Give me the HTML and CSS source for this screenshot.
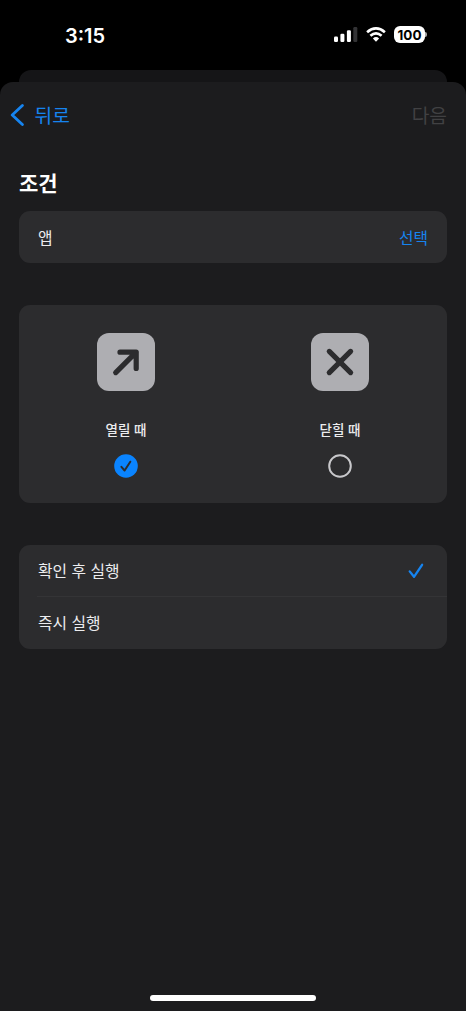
FILE: index.html
```html
<!DOCTYPE html>
<html lang="ko">
<head>
<meta charset="utf-8">
<meta name="viewport" content="width=device-width, initial-scale=1">
<title>조건</title>
<link rel="stylesheet" href="styles.css">
</head>
<body>
<div class="screen">
  <header class="status">
    <span class="time">3:15</span>
    <div class="indicators">
      <svg class="signal" width="24" height="15" viewBox="0 0 24 15">
        <rect x="0" y="9.5" width="4" height="5.5" rx="1.2"/>
        <rect x="6.4" y="6.8" width="4" height="8.2" rx="1.2"/>
        <rect x="12.9" y="3.3" width="4" height="11.7" rx="1.2"/>
        <rect class="dim" x="19.3" y="0" width="4" height="15" rx="1.2"/>
      </svg>
      <svg class="wifi" width="20" height="15" viewBox="0 0 20 15">
        <path d="M1.1 5.2Q10-2.4 18.9 5.2"/>
        <path d="M4.4 8.7Q10 3.9 15.6 8.7"/>
        <path class="dot" d="M6.9 11.4Q10 8.8 13.1 11.4L10 14.7Z"/>
      </svg>
      <div class="battery"><span class="level">100</span><i class="nub"></i></div>
    </div>
  </header>
  <div class="back-sheet"></div>
  <main class="sheet">
    <nav class="nav">
      <a class="back">
        <svg width="14" height="24" viewBox="0 0 14 24"><path d="M12.4 2.4L2.2 12L12.4 21.6"/></svg>
        <span>뒤로</span>
      </a>
      <span class="next">다음</span>
    </nav>
    <h1 class="title">조건</h1>
    <section class="card row">
      <span>앱</span>
      <span class="link">선택</span>
    </section>
    <section class="card choices">
      <div class="choice">
        <div class="tile"><svg width="58" height="58" viewBox="0 0 58 58"><path d="M18.7 39.6L39.2 19.2M23 19.2H39.2V35.4"/></svg></div>
        <span class="label">열릴 때</span>
        <svg class="radio on" width="24" height="24" viewBox="0 0 24 24"><circle cx="12" cy="12" r="11.8"/><path d="M7.4 12.8L10.6 16.5L16.3 7.7"/></svg>
      </div>
      <div class="choice">
        <div class="tile"><svg width="58" height="58" viewBox="0 0 58 58"><path d="M18.3 18.4L39.6 39.6M39.6 18.4L18.3 39.6"/></svg></div>
        <span class="label">닫힐 때</span>
        <svg class="radio" width="24" height="24" viewBox="0 0 24 24"><circle cx="12" cy="12" r="10.8"/></svg>
      </div>
    </section>
    <section class="card list">
      <div class="row option">
        <span>확인 후 실행</span>
        <svg class="check" width="16" height="16" viewBox="0 0 16 16"><path d="M1.7 8.4L6 13.8L14.1 1.8"/></svg>
      </div>
      <div class="row option divided"><span>즉시 실행</span></div>
    </section>
    <div class="home"></div>
  </main>
</div>
</body>
</html>
```
FILE: styles.css
```css
* { box-sizing: border-box; }
body { margin: 0; background: #000; font-family: "Noto Sans CJK KR", sans-serif; color: #ececee; }
svg { display: block; fill: none; stroke-linecap: round; stroke-linejoin: round; }
.screen { height: 1011px; display: flex; flex-direction: column; overflow: hidden; }
.status { height: 70px; padding: 0 39px 0 65px; display: flex; justify-content: space-between; font-family: Inter, sans-serif; color: #fff; }
.time { padding-top: 24px; font-size: 20px; line-height: 24px; font-weight: 600; }
.indicators { display: flex; align-items: flex-start; padding-top: 26px; }
.signal { margin: 1px 8px 0 0; fill: #fff; }
.dim { fill: #333335; }
.wifi { margin: 1px 8px 0 0; stroke: #fff; stroke-width: 2.7; stroke-linecap: butt; }
.wifi .dot { fill: #fff; stroke: none; }
.battery { display: flex; align-items: center; gap: 1px; }
.level { width: 31px; height: 17px; border-radius: 6px; background: #fff; color: #000; font-size: 13.5px; line-height: 18px; font-weight: 700; text-align: center; }
.nub { width: 2px; height: 5px; margin-left: -1px; border-radius: 0 2px 2px 0; background: #aaa; }
.back-sheet { height: 12px; margin: 0 19px; flex: none; border-radius: 12px 12px 0 0; background: #151517; }
.sheet { flex: 1; display: flex; flex-direction: column; padding: 0 19px; border-radius: 13px 13px 0 0; background: #1c1c1e; }
.nav { height: 66px; margin-left: -9px; display: flex; align-items: center; justify-content: space-between; font-size: 19.2px; line-height: 28px; }
.back { display: flex; align-items: center; gap: 10.5px; color: #1684f0; }
.back svg { stroke: #1684f0; stroke-width: 2.8; }
.next { color: #414143; }
.title { margin: 18px 0 12px; height: 33px; font-size: 21px; line-height: 33px; font-weight: 700; color: #fff; }
.card { flex: none; background: #2c2c2e; border-radius: 11px; }
.row { height: 52px; padding: 1px 19px 0; display: flex; align-items: center; justify-content: space-between; font-size: 15.8px; line-height: 24px; }
.link { color: #1684f0; }
.choices { height: 198px; margin: 42px 0; padding-top: 28px; display: grid; grid-template-columns: 1fr 1fr; }
.choice { display: flex; flex-direction: column; align-items: center; }
.tile { width: 58px; height: 58px; border-radius: 12px; background: #aeaeb2; }
.tile svg { stroke: #2c2c2e; stroke-width: 5.2; }
.label { margin: 28px 0 14px; font-size: 13.5px; line-height: 21px; font-weight: 500; }
.radio { stroke: #c8c8cb; stroke-width: 2; }
.on circle { fill: #0a84ff; stroke: none; }
.on path { stroke: #2c2c2e; }
.list { height: 104px; }
.option:first-child { height: 51px; }
.divided { border-top: 1px solid #343436; margin-left: 18px; padding: 0 0 1px 1px; height: 53px; }
.check { margin-right: 4px; stroke: #1684f0; stroke-width: 2.3; }
.home { width: 166px; height: 6px; margin: auto auto 10px; border-radius: 3px; background: #fff; }
```
